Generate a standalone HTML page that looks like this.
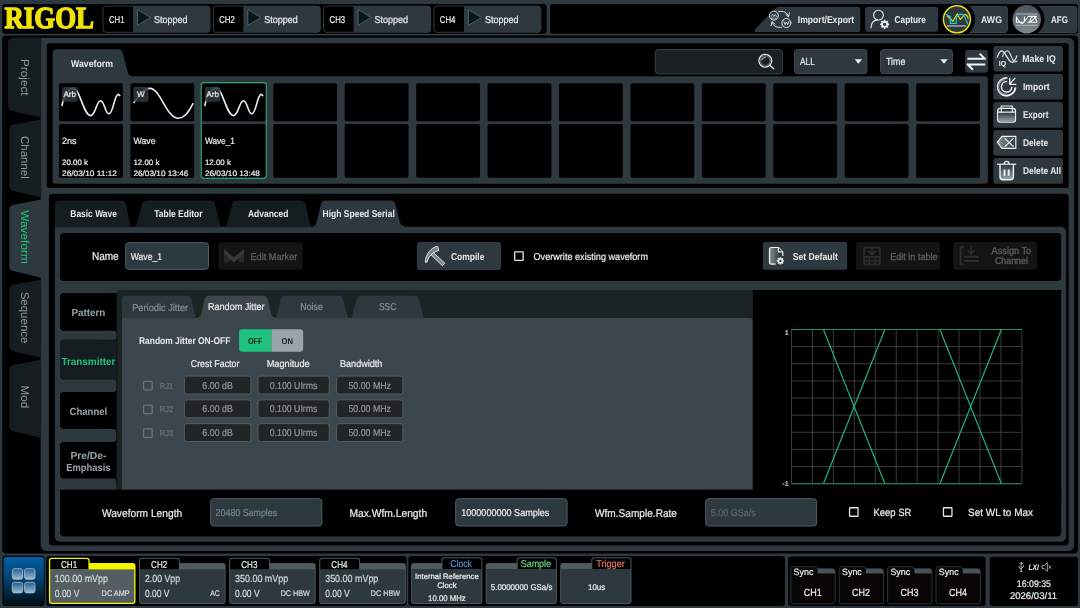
<!DOCTYPE html>
<html lang="en"><head><meta charset="utf-8"><title>RIGOL AWG - Waveform</title>
<style>
html,body{margin:0;padding:0;background:#2d383f;overflow:hidden}
body{width:1080px;height:608px}
svg{display:block;will-change:transform;font-family:"Liberation Sans",sans-serif;text-rendering:geometricPrecision}
text{white-space:pre}
</style></head><body>
<svg width="1080" height="608" viewBox="0 0 1080 608">
<defs>
<linearGradient id="gAfg" x1="0" y1="0" x2="0" y2="1"><stop offset="0" stop-color="#4a545a"/><stop offset="1" stop-color="#808b90"/></linearGradient>
<linearGradient id="gHome" x1="0" y1="0" x2="0" y2="1"><stop offset="0" stop-color="#045fa3"/><stop offset="0.45" stop-color="#04416e"/><stop offset="1" stop-color="#010d16"/></linearGradient>
<linearGradient id="gSq" x1="0" y1="0" x2="0" y2="1"><stop offset="0" stop-color="#1f5f91"/><stop offset="1" stop-color="#a3bbcd"/></linearGradient>
<linearGradient id="gIcon" x1="0" y1="0" x2="0" y2="1"><stop offset="0" stop-color="#2d383f"/><stop offset="1" stop-color="#9aa3a8"/></linearGradient>
</defs>
<rect x="0.00" y="0.00" width="1080.00" height="608.00" fill="#2d383f" />
<rect x="2.20" y="4.10" width="544.50" height="29.70" fill="#000" rx="3" />
<rect x="550.00" y="4.10" width="528.00" height="29.70" fill="#000" rx="3" />
<text x="4.40" y="28.40" font-size="30.6" fill="#f0e406" font-weight="bold" textLength="89.60" lengthAdjust="spacingAndGlyphs" font-family="&quot;Liberation Serif&quot;,serif" stroke="#f0e406" stroke-width="1.3" stroke-linejoin="miter">RIGOL</text>
<rect x="103.00" y="6.10" width="107.00" height="26.20" fill="#2d383f" rx="3" />
<path d="M133.0,5.6 H106.0 a3,3 0 0 0 -3,3 V29.8 a3,3 0 0 0 3,3 H133.0 Z" fill="#000" />
<rect x="103.00" y="6.10" width="107.00" height="26.20" fill="none" rx="3" stroke="#2d383f" stroke-width="1" />
<text x="116.70" y="22.50" font-size="9.95" fill="#e9ebec" text-anchor="middle" textLength="15.60" lengthAdjust="spacingAndGlyphs" stroke="#e9ebec" stroke-width="0.22" >CH1</text>
<path d="M137.5,9.6 L150.7,17.5 L137.5,25.4 Z" fill="#07181c" stroke="#55646c" stroke-width="0.9" stroke-linejoin="round"/>
<text x="154.00" y="22.50" font-size="9.95" fill="#e9ebec" textLength="33.50" lengthAdjust="spacingAndGlyphs" stroke="#e9ebec" stroke-width="0.22" >Stopped</text>
<rect x="213.30" y="6.10" width="107.00" height="26.20" fill="#2d383f" rx="3" />
<path d="M243.3,5.6 H216.3 a3,3 0 0 0 -3,3 V29.8 a3,3 0 0 0 3,3 H243.3 Z" fill="#000" />
<rect x="213.30" y="6.10" width="107.00" height="26.20" fill="none" rx="3" stroke="#2d383f" stroke-width="1" />
<text x="227.00" y="22.50" font-size="9.95" fill="#e9ebec" text-anchor="middle" textLength="15.60" lengthAdjust="spacingAndGlyphs" stroke="#e9ebec" stroke-width="0.22" >CH2</text>
<path d="M247.8,9.6 L261.0,17.5 L247.8,25.4 Z" fill="#07181c" stroke="#55646c" stroke-width="0.9" stroke-linejoin="round"/>
<text x="264.30" y="22.50" font-size="9.95" fill="#e9ebec" textLength="33.50" lengthAdjust="spacingAndGlyphs" stroke="#e9ebec" stroke-width="0.22" >Stopped</text>
<rect x="323.60" y="6.10" width="107.00" height="26.20" fill="#2d383f" rx="3" />
<path d="M353.6,5.6 H326.6 a3,3 0 0 0 -3,3 V29.8 a3,3 0 0 0 3,3 H353.6 Z" fill="#000" />
<rect x="323.60" y="6.10" width="107.00" height="26.20" fill="none" rx="3" stroke="#2d383f" stroke-width="1" />
<text x="337.30" y="22.50" font-size="9.95" fill="#e9ebec" text-anchor="middle" textLength="15.60" lengthAdjust="spacingAndGlyphs" stroke="#e9ebec" stroke-width="0.22" >CH3</text>
<path d="M358.1,9.6 L371.3,17.5 L358.1,25.4 Z" fill="#07181c" stroke="#55646c" stroke-width="0.9" stroke-linejoin="round"/>
<text x="374.60" y="22.50" font-size="9.95" fill="#e9ebec" textLength="33.50" lengthAdjust="spacingAndGlyphs" stroke="#e9ebec" stroke-width="0.22" >Stopped</text>
<rect x="433.90" y="6.10" width="107.00" height="26.20" fill="#2d383f" rx="3" />
<path d="M463.9,5.6 H436.9 a3,3 0 0 0 -3,3 V29.8 a3,3 0 0 0 3,3 H463.9 Z" fill="#000" />
<rect x="433.90" y="6.10" width="107.00" height="26.20" fill="none" rx="3" stroke="#2d383f" stroke-width="1" />
<text x="447.60" y="22.50" font-size="9.95" fill="#e9ebec" text-anchor="middle" textLength="15.60" lengthAdjust="spacingAndGlyphs" stroke="#e9ebec" stroke-width="0.22" >CH4</text>
<path d="M468.4,9.6 L481.59999999999997,17.5 L468.4,25.4 Z" fill="#07181c" stroke="#55646c" stroke-width="0.9" stroke-linejoin="round"/>
<text x="484.90" y="22.50" font-size="9.95" fill="#e9ebec" textLength="33.50" lengthAdjust="spacingAndGlyphs" stroke="#e9ebec" stroke-width="0.22" >Stopped</text>
<path d="M778.5,6.7 H857.8 a2.5,2.5 0 0 1 2.5,2.5 V29.4 a2.5,2.5 0 0 1 -2.5,2.5 H756 a1.6,1.6 0 0 1 -1.1,-2.7 L776.6,7.4 Z" fill="#2d383f" />
<text x="797.80" y="22.70" font-size="9.95" fill="#e9ebec" font-weight="bold" textLength="56.30" lengthAdjust="spacingAndGlyphs" >Import/Export</text>
<g fill="none" stroke="#e6e9ea" stroke-width="0.95" stroke-linecap="round" stroke-linejoin="round"><circle cx="773.9" cy="15.6" r="4.5"/><circle cx="786.4" cy="23" r="4.5"/><path d="M778.6,11.6 C783.6,10.4 787.8,12.6 788.4,16.6 M785.8,14.4 L788.4,16.9 L789.4,12.9"/><path d="M781.8,27.2 C777,28.2 772.8,26 772.2,22 M771,25.6 L772.1,21.8 L775,24.2"/><path d="M771.2,16.6 L772.5,14.2 L773.9,16.6 L775.3,14.2 L776.6,16.6 M771.6,18.2 H776.2" stroke-width="0.7"/><path d="M783.8,21.2 L785.1,24.8 L786.4,22 L787.7,24.8 L789,21.2" stroke-width="0.9"/></g>
<rect x="865.10" y="6.70" width="73.00" height="25.00" fill="#2d383f" rx="2.5" />
<text x="894.60" y="22.70" font-size="9.95" fill="#e9ebec" font-weight="bold" textLength="31.20" lengthAdjust="spacingAndGlyphs" >Capture</text>
<g fill="none" stroke="#e8eaeb" stroke-width="1.15" stroke-linecap="round"><circle cx="878.5" cy="15.1" r="4.9"/><path d="M871,27.8 C871.2,23 873.8,20.2 877.2,19.9"/></g>
<g transform="translate(884.6,24.3)"><circle r="2.5" fill="none" stroke="#eef0f1" stroke-width="1.7"/><rect x="-0.9" y="-4.5" width="1.8" height="2" fill="#eef0f1" transform="rotate(0)"/><rect x="-0.9" y="-4.5" width="1.8" height="2" fill="#eef0f1" transform="rotate(45)"/><rect x="-0.9" y="-4.5" width="1.8" height="2" fill="#eef0f1" transform="rotate(90)"/><rect x="-0.9" y="-4.5" width="1.8" height="2" fill="#eef0f1" transform="rotate(135)"/><rect x="-0.9" y="-4.5" width="1.8" height="2" fill="#eef0f1" transform="rotate(180)"/><rect x="-0.9" y="-4.5" width="1.8" height="2" fill="#eef0f1" transform="rotate(225)"/><rect x="-0.9" y="-4.5" width="1.8" height="2" fill="#eef0f1" transform="rotate(270)"/><rect x="-0.9" y="-4.5" width="1.8" height="2" fill="#eef0f1" transform="rotate(315)"/></g>
<clipPath id="cpTop"><rect x="550" y="4.1" width="528" height="29.7" rx="3"/></clipPath>
<g clip-path="url(#cpTop)">
<rect x="957.50" y="6.40" width="49.90" height="26.10" fill="#2d383f" rx="2.5" stroke="#36424a" stroke-width="1" />
<circle cx="956.9" cy="19.3" r="18.2" fill="#000"/>
<rect x="938.40" y="4.10" width="18.60" height="29.70" fill="#000" />
<rect x="1027.00" y="6.40" width="49.90" height="26.10" fill="#2d383f" rx="2.5" stroke="#36424a" stroke-width="1" />
<circle cx="1026.7" cy="19.3" r="17.8" fill="#000"/>
<rect x="1008.20" y="4.10" width="18.30" height="29.70" fill="#000" />
</g>
<circle cx="956.9" cy="19.3" r="13.5" fill="#2d383f" stroke="#e6df10" stroke-width="1.5"/>
<path d="M947,15.7 L953,21.3 L957.3,13.7 L960.3,19.7 L964,15 C966,14 967.6,15.6 968.3,18.7" fill="none" stroke="#e6df10" stroke-width="1.2" stroke-linejoin="round"/>
<path d="M945.7,14.3 L950.3,16.6 V23.3 H956.3 V17 L959.6,14.4 H962.6 C964.6,15.4 966,20.6 967.8,24" fill="none" stroke="#19cfe0" stroke-width="1.2" stroke-linejoin="round"/>
<rect x="947.00" y="25.00" width="19.30" height="1.80" fill="#8e9599" />
<text x="991.50" y="23.00" font-size="9.74" fill="#e9ebec" font-weight="bold" text-anchor="middle" textLength="21.00" lengthAdjust="spacingAndGlyphs" >AWG</text>
<circle cx="1026.7" cy="19.3" r="14.2" fill="url(#gAfg)"/>
<path d="M1016,14 H1037.3 M1016,25.3 H1037.3" stroke="#b4babd" stroke-width="1" fill="none"/>
<g fill="none" stroke="#f4f5f6" stroke-width="1.1" stroke-linejoin="round"><path d="M1016.4,16.6 V22.2 H1022.4 M1016.2,16.4 C1018,20.6 1020,23.6 1022.6,23.4 L1028.4,16.4 H1031.4 M1024.4,22.2 V16.6 M1027.4,22.2 H1037 M1029.6,22.2 C1030.6,18.6 1032.2,16.4 1033.4,16.4 C1034.8,16.4 1036,19 1037,22.4 M1030.4,22.2 L1036.6,16.4 M1031.4,16.4 H1037"/></g>
<text x="1059.50" y="23.00" font-size="9.74" fill="#e9ebec" font-weight="bold" text-anchor="middle" textLength="17.00" lengthAdjust="spacingAndGlyphs" >AFG</text>
<rect x="2.20" y="35.50" width="1075.80" height="518.00" fill="#000" rx="4" />
<path d="M40.7,37.8 H1068.2 a6,6 0 0 1 6,6 V545 a6,6 0 0 1 -6,6 H46.7 a6,6 0 0 1 -6,-6 Z" fill="#2d383f" />
<path d="M41.2,37.8 H12.9 a5,5 0 0 0 -5,5 V106.0 Q7.9,110.0 11.9,110.9 L41.2,117.5 Z" fill="#161d20" />
<text transform="translate(21.2,59.1) rotate(90)" font-size="11.5" fill="#8e979b" textLength="36.4" lengthAdjust="spacingAndGlyphs">Project</text>
<path d="M41.2,119.5 L13.3,124.6 Q9.3,125.5 9.3,129.5 V186.1 Q9.3,190.1 13.3,191.0 L41.2,197.6 Z" fill="#161d20" />
<text transform="translate(21.2,136.1) rotate(90)" font-size="11.5" fill="#8e979b" textLength="42.6" lengthAdjust="spacingAndGlyphs">Channel</text>
<path d="M41.2,199.6 L13.3,204.7 Q9.3,205.6 9.3,209.6 V266.2 Q9.3,270.2 13.3,271.09999999999997 L41.2,277.7 Z" fill="#2d383f" />
<text transform="translate(21.2,210.3) rotate(90)" font-size="11.5" fill="#1fc27c" textLength="53.5" lengthAdjust="spacingAndGlyphs">Waveform</text>
<path d="M41.2,279.7 L13.3,284.8 Q9.3,285.7 9.3,289.7 V346.29999999999995 Q9.3,350.29999999999995 13.3,351.19999999999993 L41.2,357.79999999999995 Z" fill="#161d20" />
<text transform="translate(21.2,291.7) rotate(90)" font-size="11.5" fill="#8e979b" textLength="51.7" lengthAdjust="spacingAndGlyphs">Sequence</text>
<path d="M41.2,359.79999999999995 L13.3,364.9 Q9.3,365.79999999999995 9.3,369.79999999999995 V426.4 Q9.3,430.4 13.3,431.29999999999995 L41.2,437.9 Z" fill="#161d20" />
<text transform="translate(21.2,385.4) rotate(90)" font-size="11.5" fill="#8e979b" textLength="22.8" lengthAdjust="spacingAndGlyphs">Mod</text>
<rect x="46.80" y="43.30" width="1021.90" height="144.70" fill="#000" rx="2.5" />
<rect x="48.90" y="193.80" width="1019.80" height="351.60" fill="#000" rx="4" />
<path d="M52.6,80 V53.3 a4,4 0 0 1 4,-4 H118.6 a4,4 0 0 1 3.8,2.8 L128.2,73.6 a4,4 0 0 0 3.6,2.7 H984.9 a3,3 0 0 1 3,3 V180.7 a3,3 0 0 1 -3,3 H55.6 a3,3 0 0 1 -3,-3 Z" fill="#2d383f" />
<text x="92.00" y="66.60" font-size="9.95" fill="#e9ebec" font-weight="bold" text-anchor="middle" textLength="42.00" lengthAdjust="spacingAndGlyphs" >Waveform</text>
<rect x="59.00" y="83.30" width="63.80" height="37.90" fill="#000" rx="2" />
<rect x="59.00" y="124.00" width="63.80" height="53.70" fill="#000" rx="2" />
<rect x="130.43" y="83.30" width="63.80" height="37.90" fill="#000" rx="2" />
<rect x="130.43" y="124.00" width="63.80" height="53.70" fill="#000" rx="2" />
<rect x="201.86" y="83.30" width="63.80" height="37.90" fill="#000" rx="2" />
<rect x="201.86" y="124.00" width="63.80" height="53.70" fill="#000" rx="2" />
<rect x="273.29" y="83.30" width="63.80" height="37.90" fill="#000" rx="2" />
<rect x="273.29" y="124.00" width="63.80" height="53.70" fill="#000" rx="2" />
<rect x="344.72" y="83.30" width="63.80" height="37.90" fill="#000" rx="2" />
<rect x="344.72" y="124.00" width="63.80" height="53.70" fill="#000" rx="2" />
<rect x="416.15" y="83.30" width="63.80" height="37.90" fill="#000" rx="2" />
<rect x="416.15" y="124.00" width="63.80" height="53.70" fill="#000" rx="2" />
<rect x="487.58" y="83.30" width="63.80" height="37.90" fill="#000" rx="2" />
<rect x="487.58" y="124.00" width="63.80" height="53.70" fill="#000" rx="2" />
<rect x="559.01" y="83.30" width="63.80" height="37.90" fill="#000" rx="2" />
<rect x="559.01" y="124.00" width="63.80" height="53.70" fill="#000" rx="2" />
<rect x="630.44" y="83.30" width="63.80" height="37.90" fill="#000" rx="2" />
<rect x="630.44" y="124.00" width="63.80" height="53.70" fill="#000" rx="2" />
<rect x="701.87" y="83.30" width="63.80" height="37.90" fill="#000" rx="2" />
<rect x="701.87" y="124.00" width="63.80" height="53.70" fill="#000" rx="2" />
<rect x="773.30" y="83.30" width="63.80" height="37.90" fill="#000" rx="2" />
<rect x="773.30" y="124.00" width="63.80" height="53.70" fill="#000" rx="2" />
<rect x="844.73" y="83.30" width="63.80" height="37.90" fill="#000" rx="2" />
<rect x="844.73" y="124.00" width="63.80" height="53.70" fill="#000" rx="2" />
<rect x="916.16" y="83.30" width="63.80" height="37.90" fill="#000" rx="2" />
<rect x="916.16" y="124.00" width="63.80" height="53.70" fill="#000" rx="2" />
<rect x="201.20" y="82.60" width="65.20" height="95.80" fill="none" rx="2.6" stroke="#2a9f70" stroke-width="1.1" />
<path d="M62,105.5 C64,96 68,88.4 73.5,88.4 C80,88.4 83.5,115.6 90.5,115.6 C95.5,115.6 96.5,100.8 100.6,100.8 C104.5,100.8 105,113.8 108.8,113.8 C113.5,113.8 114,94.4 118.4,94.4 L119.8,95.6" fill="none" stroke="#eceeee" stroke-width="1.6" stroke-linecap="round"/>
<rect x="62.00" y="86.70" width="15.50" height="15.10" fill="#2d383f" rx="2" fill-opacity="0.85"/>
<text x="69.75" y="97.20" font-size="8.13" fill="#e9ebec" text-anchor="middle" stroke="#e9ebec" stroke-width="0.22" >Arb</text>
<path d="M134.0,102.6 C138.4,96 143.4,88.4 150.0,88.4 C160.4,88.4 166.4,118.3 178.4,118.3 C184.4,118.3 189.4,111 193.0,103.6" fill="none" stroke="#eceeee" stroke-width="1.6" stroke-linecap="round"/>
<rect x="133.40" y="86.70" width="15.00" height="15.10" fill="#2d383f" rx="2" fill-opacity="0.85"/>
<text x="140.90" y="97.20" font-size="8.13" fill="#e9ebec" text-anchor="middle" stroke="#e9ebec" stroke-width="0.22" >W</text>
<path d="M204.9,105.5 C206.9,96 210.9,88.4 216.4,88.4 C222.9,88.4 226.4,115.6 233.4,115.6 C238.4,115.6 239.4,100.8 243.5,100.8 C247.4,100.8 247.9,113.8 251.7,113.8 C256.4,113.8 256.9,94.4 261.3,94.4 L262.7,95.6" fill="none" stroke="#eceeee" stroke-width="1.6" stroke-linecap="round"/>
<rect x="204.90" y="86.70" width="15.50" height="15.10" fill="#2d383f" rx="2" fill-opacity="0.85"/>
<text x="212.65" y="97.20" font-size="8.13" fill="#e9ebec" text-anchor="middle" stroke="#e9ebec" stroke-width="0.22" >Arb</text>
<text x="62.00" y="143.60" font-size="9.2" fill="#e9ebec" textLength="14.60" lengthAdjust="spacingAndGlyphs" stroke="#e9ebec" stroke-width="0.22" >2ns</text>
<text x="62.00" y="165.20" font-size="7.81" fill="#e9ebec" textLength="26.00" lengthAdjust="spacingAndGlyphs" stroke="#e9ebec" stroke-width="0.22" >20.00 k</text>
<text x="62.00" y="176.10" font-size="7.81" fill="#e9ebec" textLength="55.00" lengthAdjust="spacingAndGlyphs" stroke="#e9ebec" stroke-width="0.22" >26/03/10 11:12</text>
<text x="133.40" y="143.60" font-size="9.2" fill="#e9ebec" textLength="22.20" lengthAdjust="spacingAndGlyphs" stroke="#e9ebec" stroke-width="0.22" >Wave</text>
<text x="133.40" y="165.20" font-size="7.81" fill="#e9ebec" textLength="26.00" lengthAdjust="spacingAndGlyphs" stroke="#e9ebec" stroke-width="0.22" >12.00 k</text>
<text x="133.40" y="176.10" font-size="7.81" fill="#e9ebec" textLength="55.00" lengthAdjust="spacingAndGlyphs" stroke="#e9ebec" stroke-width="0.22" >26/03/10 13:46</text>
<text x="204.90" y="143.60" font-size="9.2" fill="#e9ebec" textLength="30.00" lengthAdjust="spacingAndGlyphs" stroke="#e9ebec" stroke-width="0.22" >Wave_1</text>
<text x="204.90" y="165.20" font-size="7.81" fill="#e9ebec" textLength="26.00" lengthAdjust="spacingAndGlyphs" stroke="#e9ebec" stroke-width="0.22" >12.00 k</text>
<text x="204.90" y="176.10" font-size="7.81" fill="#e9ebec" textLength="55.00" lengthAdjust="spacingAndGlyphs" stroke="#e9ebec" stroke-width="0.22" >26/03/10 13:48</text>
<rect x="655.30" y="49.60" width="127.10" height="24.30" fill="#1b2024" rx="3" stroke="#364249" stroke-width="1" />
<g fill="none" stroke-linecap="round"><circle cx="765.3" cy="60.7" r="6.4" stroke="#eceeef" stroke-width="1.3"/><circle cx="765.3" cy="60.7" r="5" stroke="#586166" stroke-width="1.5"/><path d="M761.8,60 A3.8,3.8 0 0 1 765.2,57.2" stroke="#d4d8da" stroke-width="0.9"/><path d="M769.9,65.3 L773.7,68.7" stroke="#eceeef" stroke-width="1.5"/></g>
<rect x="794.50" y="49.50" width="72.40" height="24.20" fill="#2d383f" rx="3" stroke="#3d4950" stroke-width="1" />
<text x="800.00" y="65.20" font-size="10.27" fill="#e9ebec" textLength="14.80" lengthAdjust="spacingAndGlyphs" stroke="#e9ebec" stroke-width="0.22" >ALL</text>
<path d="M854.6,59.2 h7.6 l-3.8,4.6 Z" fill="#e9ebec" />
<rect x="880.50" y="49.50" width="72.00" height="24.20" fill="#2d383f" rx="3" stroke="#3d4950" stroke-width="1" />
<text x="886.00" y="65.20" font-size="10.27" fill="#e9ebec" textLength="19.30" lengthAdjust="spacingAndGlyphs" stroke="#e9ebec" stroke-width="0.22" >Time</text>
<path d="M940.2,59.2 h7.6 l-3.8,4.6 Z" fill="#e9ebec" />
<rect x="965.20" y="50.00" width="22.70" height="22.70" fill="#2d383f" rx="2.5" />
<g fill="none" stroke="#f4f5f6" stroke-width="2" stroke-linecap="butt" stroke-linejoin="miter"><path d="M967.4,58.8 H985.2 M985.6,59.4 L979.6,53.6"/><path d="M985.2,64.4 H967.4 M967,63.8 L973,69.8"/></g>
<rect x="993.30" y="46.00" width="69.70" height="25.60" fill="#2d383f" rx="2.5" />
<text x="1022.30" y="61.70" font-size="9.84" fill="#e9ebec" font-weight="bold" textLength="33.50" lengthAdjust="spacingAndGlyphs" >Make IQ</text>
<rect x="993.30" y="74.02" width="69.70" height="25.60" fill="#2d383f" rx="2.5" />
<text x="1022.90" y="89.72" font-size="9.84" fill="#e9ebec" font-weight="bold" textLength="26.70" lengthAdjust="spacingAndGlyphs" >Import</text>
<rect x="993.30" y="102.04" width="69.70" height="25.60" fill="#2d383f" rx="2.5" />
<text x="1022.90" y="117.74" font-size="9.84" fill="#e9ebec" font-weight="bold" textLength="25.50" lengthAdjust="spacingAndGlyphs" >Export</text>
<rect x="993.30" y="130.06" width="69.70" height="25.60" fill="#2d383f" rx="2.5" />
<text x="1022.90" y="145.76" font-size="9.84" fill="#e9ebec" font-weight="bold" textLength="25.20" lengthAdjust="spacingAndGlyphs" >Delete</text>
<rect x="993.30" y="158.08" width="69.70" height="25.60" fill="#2d383f" rx="2.5" />
<text x="1022.90" y="173.78" font-size="9.84" fill="#e9ebec" font-weight="bold" textLength="38.10" lengthAdjust="spacingAndGlyphs" >Delete All</text>
<g stroke="#eef0f1" fill="none" stroke-linecap="round" stroke-linejoin="round" stroke-width="1.2"><path d="M997.2,57.4 C998.6,53.4 1000,50.9 1001.6,50.9 C1005.4,50.9 1008,62.3 1012.2,62.3 C1014,62.3 1015.6,59.4 1016.9,55.8"/><path d="M1002.4,56.8 C1003.8,53.2 1005.6,50.9 1007.4,50.9 C1010.6,50.9 1012,61.9 1015.2,61.9 C1015.9,61.9 1016.5,61.6 1017,61.1" stroke="#c9cdd0"/></g>
<text x="998.70" y="65.60" font-size="7.28" fill="#e9ebec" font-weight="bold" textLength="7.40" lengthAdjust="spacingAndGlyphs" >IQ</text>
<g stroke="#eef0f1" fill="none" stroke-linecap="round" stroke-linejoin="round"><path d="M1006.6,77.9 A8.9,8.9 0 1 0 1015.4,88.2" stroke-width="1.9"/><path d="M1004.6,79.6 A7.2,7.2 0 0 0 1006.6,94" stroke="#8d969b" stroke-width="1.6" stroke-opacity="0.75"/><path d="M1006.6,81.6 A5.2,5.2 0 1 0 1011.8,87.4" stroke-width="1.5"/><path d="M1015.2,77.9 L1009.9,83.9 M1009.7,77.8 V84.3 H1016.3" stroke-width="1.3" stroke-linecap="butt"/></g>
<g stroke="#eef0f1" fill="none" stroke-linecap="round" stroke-linejoin="round" stroke-width="1.3"><rect x="997.7" y="108.3" width="17.8" height="13.9" rx="2.6"/><rect x="998.4" y="112.6" width="16.4" height="9" rx="1.8" fill="url(#gIcon)" stroke="none"/><path d="M997.7,112.1 H1015.5"/><path d="M1001.3,112 V106 H1012.3 V112" stroke-width="1.2"/></g>
<linearGradient id="gDel" x1="0" y1="0" x2="1" y2="0"><stop offset="0" stop-color="#8a9398"/><stop offset="1" stop-color="#2d383f"/></linearGradient>
<g stroke="#eef0f1" fill="none" stroke-linecap="round" stroke-linejoin="round" stroke-width="1.2"><path d="M1002,136.3 H1015.8 V148.3 H1002 L997.3,142.3 Z" fill="url(#gDel)" stroke-linejoin="miter"/><path d="M1005,138.6 L1013.2,146.4 M1013.2,138.6 L1005,146.4"/></g>
<g stroke="#eef0f1" fill="none" stroke-linecap="round" stroke-linejoin="round" stroke-width="1.2"><path d="M997,164.2 H1016.2" stroke-linecap="butt"/><path d="M1004.2,163.8 a2.4,2.4 0 0 1 4.8,0" /><path d="M1000,165 V176.8 a3,3 0 0 0 3,3 H1010.4 a3,3 0 0 0 3,-3 V165" fill="url(#gIcon)" stroke-width="1.4"/><path d="M1004.5,169.4 V175.8 M1008.7,169.4 V175.8" stroke-width="1.9" stroke-linecap="butt"/></g>
<rect x="54.80" y="226.70" width="1011.20" height="315.00" fill="#2d383f" rx="5" />
<rect x="54.80" y="226.70" width="5.20" height="5.30" fill="#2d383f" />
<path d="M54.80,227.2 L54.80,204.40 Q54.80,200.4 58.80,200.4 H121.20 Q125.20,200.4 125.99,204.32 L130.60,227.2 Z" fill="#161d20" />
<path d="M135.40,227.2 L141.91,204.25 Q143.00,200.4 147.00,200.4 H210.00 Q214.00,200.4 214.98,204.28 L220.80,227.2 Z" fill="#161d20" />
<path d="M225.80,227.2 L232.22,204.25 Q233.30,200.4 237.30,200.4 H300.80 Q304.80,200.4 305.65,204.31 L310.60,227.2 Z" fill="#161d20" />
<path d="M315.40,227.2 L320.96,204.29 Q321.90,200.4 325.90,200.4 H390.40 Q394.40,200.4 395.38,204.28 L401.20,227.2 Z" fill="#2d383f" />
<path d="M401.2,227.2 L399.4,221.2 Q401.4,226.6 406.6,226.8 Z" fill="#2d383f" />
<path d="M315.4,227.2 L317,221.2 Q315.6,226.6 311.4,226.8 Z" fill="#2d383f" />
<text x="93.60" y="217.10" font-size="9.95" fill="#e9ebec" font-weight="bold" text-anchor="middle" textLength="46.60" lengthAdjust="spacingAndGlyphs" >Basic Wave</text>
<text x="178.40" y="217.10" font-size="9.95" fill="#e9ebec" font-weight="bold" text-anchor="middle" textLength="48.40" lengthAdjust="spacingAndGlyphs" >Table Editor</text>
<text x="268.20" y="217.10" font-size="9.95" fill="#e9ebec" font-weight="bold" text-anchor="middle" textLength="40.60" lengthAdjust="spacingAndGlyphs" >Advanced</text>
<text x="358.70" y="217.10" font-size="9.95" fill="#e9ebec" font-weight="bold" text-anchor="middle" textLength="72.20" lengthAdjust="spacingAndGlyphs" >High Speed Serial</text>
<rect x="60.00" y="233.00" width="1001.20" height="48.00" fill="#000" rx="4" />
<text x="91.90" y="260.20" font-size="11.34" fill="#e9ebec" textLength="26.80" lengthAdjust="spacingAndGlyphs" stroke="#e9ebec" stroke-width="0.22" >Name</text>
<rect x="125.70" y="242.70" width="82.80" height="26.60" fill="#2d383f" rx="3" stroke="#50606a" stroke-width="1" />
<text x="130.80" y="259.60" font-size="9.95" fill="#e9ebec" textLength="31.20" lengthAdjust="spacingAndGlyphs" stroke="#e9ebec" stroke-width="0.22" >Wave_1</text>
<rect x="218.50" y="242.20" width="84.10" height="27.60" fill="#131414" rx="3" />
<path d="M224,249 L234,258 L244,249 V262.6 H240.6 L234,257 L227.4,262.6 H224 Z" fill="#26292b" />
<path d="M224,249 L234,257.6 L244,249 V253.6 L234,262.4 L224,253.6 Z" fill="#34393c" />
<text x="250.40" y="259.50" font-size="9.95" fill="#596064" textLength="47.00" lengthAdjust="spacingAndGlyphs" stroke="#596064" stroke-width="0.3">Edit Marker</text>
<rect x="416.90" y="242.00" width="84.20" height="28.00" fill="#2d383f" rx="2.5" />
<text x="451.00" y="259.60" font-size="9.95" fill="#e9ebec" font-weight="bold" textLength="33.40" lengthAdjust="spacingAndGlyphs" >Compile</text>
<g fill="#7b858a" stroke="#f2f3f4" stroke-width="0.9" stroke-linejoin="round"><path d="M425.3,262.2 C425.6,254.6 430.2,248 437.5,246.2 L438.8,250.5 C432.6,252.4 428.2,256.4 427,262.2 Z"/><path d="M431,254.8 L433.3,252.6 L444.9,263.3 L442.5,265.7 Z"/></g>
<rect x="514.65" y="251.95" width="8.50" height="8.50" fill="#000" rx="0.4" stroke="#dfe2e3" stroke-width="1.3" />
<text x="533.50" y="259.60" font-size="9.95" fill="#e9ebec" textLength="114.50" lengthAdjust="spacingAndGlyphs" stroke="#e9ebec" stroke-width="0.22" >Overwrite existing waveform</text>
<rect x="762.80" y="241.90" width="84.40" height="27.90" fill="#2d383f" rx="2.5" />
<text x="792.80" y="259.60" font-size="9.95" fill="#e9ebec" font-weight="bold" textLength="45.00" lengthAdjust="spacingAndGlyphs" >Set Default</text>
<linearGradient id="gDoc" x1="0" y1="0" x2="1" y2="0"><stop offset="0" stop-color="#868f94"/><stop offset="0.8" stop-color="#2d383f"/></linearGradient>
<g fill="none" stroke="#f0f2f3" stroke-width="1.2" stroke-linejoin="round"><path d="M775.6,264.1 H771 a1.5,1.5 0 0 1 -1.5,-1.5 V249 a1.5,1.5 0 0 1 1.5,-1.5 H778.4 L782.8,251.9 V256" fill="url(#gDoc)"/><path d="M778.4,247.5 V251.9 H782.8" fill="#2d383f"/></g>
<g transform="translate(780.4,260.9)"><circle r="1.9" fill="#2d383f" stroke="#f0f2f3" stroke-width="1.3"/><rect x="-0.75" y="-3.6" width="1.5" height="1.6" fill="#f0f2f3" transform="rotate(0)"/><rect x="-0.75" y="-3.6" width="1.5" height="1.6" fill="#f0f2f3" transform="rotate(45)"/><rect x="-0.75" y="-3.6" width="1.5" height="1.6" fill="#f0f2f3" transform="rotate(90)"/><rect x="-0.75" y="-3.6" width="1.5" height="1.6" fill="#f0f2f3" transform="rotate(135)"/><rect x="-0.75" y="-3.6" width="1.5" height="1.6" fill="#f0f2f3" transform="rotate(180)"/><rect x="-0.75" y="-3.6" width="1.5" height="1.6" fill="#f0f2f3" transform="rotate(225)"/><rect x="-0.75" y="-3.6" width="1.5" height="1.6" fill="#f0f2f3" transform="rotate(270)"/><rect x="-0.75" y="-3.6" width="1.5" height="1.6" fill="#f0f2f3" transform="rotate(315)"/></g>
<rect x="856.00" y="241.90" width="84.00" height="27.90" fill="#131414" rx="2.5" />
<text x="890.20" y="259.50" font-size="9.95" fill="#596064" textLength="47.40" lengthAdjust="spacingAndGlyphs" stroke="#596064" stroke-width="0.3">Edit in table</text>
<g fill="none" stroke="#2b2f31" stroke-width="1.5" stroke-linejoin="round"><rect x="864" y="247.8" width="16" height="16.8" rx="2"/><path d="M864,256.7 H880 M864,261 H880 M869.2,256.7 V264.6 M874.9,256.7 V264.6 M872,247.4 V254.4 M868.4,251 L872,254.6 L875.6,251"/></g>
<rect x="953.20" y="241.90" width="84.00" height="27.90" fill="#131414" rx="2.5" />
<text x="1011.40" y="254.00" font-size="9.95" fill="#596064" text-anchor="middle" textLength="39.60" lengthAdjust="spacingAndGlyphs" stroke="#596064" stroke-width="0.3">Assign To</text>
<text x="1011.40" y="264.30" font-size="9.95" fill="#596064" text-anchor="middle" textLength="33.00" lengthAdjust="spacingAndGlyphs" stroke="#596064" stroke-width="0.3">Channel</text>
<g fill="none" stroke="#2b2f31" stroke-width="1.9" stroke-linejoin="miter"><path d="M964,247.2 H960.6 V264.4 H964"/><path d="M964,256.7 H978.7 M964,261 H978.7"/><path d="M971.3,246.4 V253.6 M967.6,250.2 L971.3,253.9 L975,250.2" stroke-width="1.5"/></g>
<rect x="60.00" y="293.00" width="56.80" height="37.70" fill="#000" rx="4" />
<rect x="108.00" y="293.00" width="8.60" height="37.70" fill="#000" />
<rect x="60.00" y="339.40" width="56.80" height="40.40" fill="#161d20" rx="4" />
<rect x="108.00" y="339.40" width="8.60" height="40.40" fill="#161d20" />
<rect x="60.00" y="392.00" width="56.80" height="37.00" fill="#000" rx="4" />
<rect x="108.00" y="392.00" width="8.60" height="37.00" fill="#000" />
<rect x="60.00" y="442.00" width="56.80" height="36.50" fill="#000" rx="4" />
<rect x="108.00" y="442.00" width="8.60" height="36.50" fill="#000" />
<text x="88.40" y="316.20" font-size="10.27" fill="#9aa4a9" font-weight="bold" text-anchor="middle" textLength="34.00" lengthAdjust="spacingAndGlyphs" >Pattern</text>
<text x="88.40" y="364.80" font-size="10.27" fill="#1fc27c" font-weight="bold" text-anchor="middle" textLength="54.00" lengthAdjust="spacingAndGlyphs" >Transmitter</text>
<text x="88.40" y="414.80" font-size="10.27" fill="#9aa4a9" font-weight="bold" text-anchor="middle" textLength="37.60" lengthAdjust="spacingAndGlyphs" >Channel</text>
<text x="88.40" y="459.40" font-size="10.27" fill="#9aa4a9" font-weight="bold" text-anchor="middle" textLength="36.00" lengthAdjust="spacingAndGlyphs" >Pre/De-</text>
<text x="88.40" y="470.80" font-size="10.27" fill="#9aa4a9" font-weight="bold" text-anchor="middle" textLength="44.40" lengthAdjust="spacingAndGlyphs" >Emphasis</text>
<path d="M119.4,290 H752.8 V489.9 H116.4 V293 a3,3 0 0 1 3,-3 Z" fill="#1b2423" />
<path d="M116.4,290 h-6 q6,0 6,6 Z" fill="#2d383f" />
<path d="M122,318.1 H749.8 a3,3 0 0 1 3,3 V489.9 H122 Z" fill="#3c474d" />
<rect x="116.20" y="293.50" width="1.20" height="196.40" fill="#0e1414" />
<rect x="110.00" y="330.50" width="6.40" height="4.55" fill="#000" />
<rect x="110.00" y="335.05" width="6.40" height="4.55" fill="#161d20" />
<rect x="100.00" y="330.70" width="16.30" height="8.70" fill="#2d383f" rx="3" />
<rect x="110.00" y="379.60" width="6.40" height="6.30" fill="#161d20" />
<rect x="110.00" y="385.90" width="6.40" height="6.30" fill="#000" />
<rect x="100.00" y="379.80" width="16.30" height="12.20" fill="#2d383f" rx="3" />
<rect x="110.00" y="428.80" width="6.40" height="6.70" fill="#000" />
<rect x="110.00" y="435.50" width="6.40" height="6.70" fill="#000" />
<rect x="100.00" y="429.00" width="16.30" height="13.00" fill="#2d383f" rx="3" />
<rect x="110.00" y="478.60" width="6.40" height="8.30" fill="#000" />
<rect x="110.00" y="486.90" width="6.40" height="8.30" fill="#2d383f" />
<rect x="100.00" y="478.80" width="16.30" height="16.20" fill="#2d383f" rx="3" />
<path d="M122.00,318.3 L122.00,299.30 Q122.00,295.8 125.50,295.8 H186.90 Q190.40,295.8 191.25,299.20 L196.00,318.3 Z" fill="#2d383f" />
<path d="M200.20,318.3 L204.61,299.21 Q205.40,295.8 208.90,295.8 H263.40 Q266.90,295.8 267.70,299.21 L272.20,318.3 Z" fill="#3c474d" />
<path d="M276.00,318.3 L280.75,299.20 Q281.60,295.8 285.10,295.8 H338.50 Q342.00,295.8 342.90,299.18 L348.00,318.3 Z" fill="#2d383f" />
<path d="M351.60,318.3 L356.70,299.18 Q357.60,295.8 361.10,295.8 H414.50 Q418.00,295.8 418.87,299.19 L423.80,318.3 Z" fill="#2d383f" />
<path d="M272.2,318.3 L270.8,312.9 Q272.4,317.7 276.6,317.9 V318.3 Z" fill="#3c474d" />
<path d="M200.2,318.3 L201.6,312.9 Q200.2,317.7 196.6,317.9 V318.3 Z" fill="#3c474d" />
<text x="160.20" y="310.50" font-size="9.95" fill="#869095" text-anchor="middle" textLength="56.00" lengthAdjust="spacingAndGlyphs" stroke="#869095" stroke-width="0.22" >Periodic Jitter</text>
<text x="236.20" y="310.20" font-size="9.95" fill="#e9ebec" text-anchor="middle" textLength="56.60" lengthAdjust="spacingAndGlyphs" stroke="#e9ebec" stroke-width="0.22" >Random Jitter</text>
<text x="311.60" y="310.40" font-size="9.95" fill="#869095" text-anchor="middle" textLength="22.60" lengthAdjust="spacingAndGlyphs" stroke="#869095" stroke-width="0.22" >Noise</text>
<text x="387.60" y="310.40" font-size="9.95" fill="#869095" text-anchor="middle" textLength="17.40" lengthAdjust="spacingAndGlyphs" stroke="#869095" stroke-width="0.22" >SSC</text>
<text x="139.00" y="344.00" font-size="9.95" fill="#e9ebec" font-weight="bold" textLength="91.40" lengthAdjust="spacingAndGlyphs" >Random Jitter ON-OFF</text>
<path d="M271.3,329.3 H242.1 a3,3 0 0 0 -3,3 V348.8 a3,3 0 0 0 3,3 H271.3 Z" fill="#20c37d" />
<path d="M271.3,329.3 H300.2 a3,3 0 0 1 3,3 V348.8 a3,3 0 0 1 -3,3 H271.3 Z" fill="#9aa5a9" />
<text x="255.20" y="343.60" font-size="8.56" fill="#10251c" font-weight="bold" text-anchor="middle" textLength="14.60" lengthAdjust="spacingAndGlyphs" >OFF</text>
<text x="287.20" y="343.60" font-size="8.56" fill="#1b2428" font-weight="bold" text-anchor="middle" textLength="11.40" lengthAdjust="spacingAndGlyphs" >ON</text>
<text x="215.10" y="367.20" font-size="9.95" fill="#e9ebec" text-anchor="middle" textLength="48.60" lengthAdjust="spacingAndGlyphs" stroke="#e9ebec" stroke-width="0.22" >Crest Factor</text>
<text x="288.20" y="367.20" font-size="9.95" fill="#e9ebec" text-anchor="middle" textLength="43.00" lengthAdjust="spacingAndGlyphs" stroke="#e9ebec" stroke-width="0.22" >Magnitude</text>
<text x="361.20" y="367.20" font-size="9.95" fill="#e9ebec" text-anchor="middle" textLength="42.50" lengthAdjust="spacingAndGlyphs" stroke="#e9ebec" stroke-width="0.22" >Bandwidth</text>
<rect x="143.60" y="381.30" width="8.60" height="8.60" fill="none" rx="0.8" stroke="#6a757b" stroke-width="1.2" />
<text x="159.80" y="388.70" font-size="8.56" fill="#67737a" textLength="13.40" lengthAdjust="spacingAndGlyphs" stroke="#67737a" stroke-width="0.22" >RJ1</text>
<rect x="184.40" y="376.10" width="66.50" height="17.90" fill="#222526" rx="2.5" stroke="#525d63" stroke-width="1" />
<text x="217.65" y="388.50" font-size="9.95" fill="#90969a" text-anchor="middle" textLength="30.60" lengthAdjust="spacingAndGlyphs" stroke="#90969a" stroke-width="0.22" >6.00 dB</text>
<rect x="258.00" y="376.10" width="71.20" height="17.90" fill="#222526" rx="2.5" stroke="#525d63" stroke-width="1" />
<text x="293.60" y="388.50" font-size="9.95" fill="#90969a" text-anchor="middle" textLength="47.60" lengthAdjust="spacingAndGlyphs" stroke="#90969a" stroke-width="0.22" >0.100 UIrms</text>
<rect x="336.60" y="376.10" width="66.20" height="17.90" fill="#222526" rx="2.5" stroke="#525d63" stroke-width="1" />
<text x="369.70" y="388.50" font-size="9.95" fill="#90969a" text-anchor="middle" textLength="42.60" lengthAdjust="spacingAndGlyphs" stroke="#90969a" stroke-width="0.22" >50.00 MHz</text>
<rect x="143.60" y="405.05" width="8.60" height="8.60" fill="none" rx="0.8" stroke="#6a757b" stroke-width="1.2" />
<text x="159.80" y="412.45" font-size="8.56" fill="#67737a" textLength="13.40" lengthAdjust="spacingAndGlyphs" stroke="#67737a" stroke-width="0.22" >RJ2</text>
<rect x="184.40" y="399.85" width="66.50" height="17.90" fill="#222526" rx="2.5" stroke="#525d63" stroke-width="1" />
<text x="217.65" y="412.25" font-size="9.95" fill="#90969a" text-anchor="middle" textLength="30.60" lengthAdjust="spacingAndGlyphs" stroke="#90969a" stroke-width="0.22" >6.00 dB</text>
<rect x="258.00" y="399.85" width="71.20" height="17.90" fill="#222526" rx="2.5" stroke="#525d63" stroke-width="1" />
<text x="293.60" y="412.25" font-size="9.95" fill="#90969a" text-anchor="middle" textLength="47.60" lengthAdjust="spacingAndGlyphs" stroke="#90969a" stroke-width="0.22" >0.100 UIrms</text>
<rect x="336.60" y="399.85" width="66.20" height="17.90" fill="#222526" rx="2.5" stroke="#525d63" stroke-width="1" />
<text x="369.70" y="412.25" font-size="9.95" fill="#90969a" text-anchor="middle" textLength="42.60" lengthAdjust="spacingAndGlyphs" stroke="#90969a" stroke-width="0.22" >50.00 MHz</text>
<rect x="143.60" y="428.80" width="8.60" height="8.60" fill="none" rx="0.8" stroke="#6a757b" stroke-width="1.2" />
<text x="159.80" y="436.20" font-size="8.56" fill="#67737a" textLength="13.40" lengthAdjust="spacingAndGlyphs" stroke="#67737a" stroke-width="0.22" >RJ3</text>
<rect x="184.40" y="423.60" width="66.50" height="17.90" fill="#222526" rx="2.5" stroke="#525d63" stroke-width="1" />
<text x="217.65" y="436.00" font-size="9.95" fill="#90969a" text-anchor="middle" textLength="30.60" lengthAdjust="spacingAndGlyphs" stroke="#90969a" stroke-width="0.22" >6.00 dB</text>
<rect x="258.00" y="423.60" width="71.20" height="17.90" fill="#222526" rx="2.5" stroke="#525d63" stroke-width="1" />
<text x="293.60" y="436.00" font-size="9.95" fill="#90969a" text-anchor="middle" textLength="47.60" lengthAdjust="spacingAndGlyphs" stroke="#90969a" stroke-width="0.22" >0.100 UIrms</text>
<rect x="336.60" y="423.60" width="66.20" height="17.90" fill="#222526" rx="2.5" stroke="#525d63" stroke-width="1" />
<text x="369.70" y="436.00" font-size="9.95" fill="#90969a" text-anchor="middle" textLength="42.60" lengthAdjust="spacingAndGlyphs" stroke="#90969a" stroke-width="0.22" >50.00 MHz</text>
<rect x="752.80" y="290.00" width="308.40" height="202.00" fill="#000" />
<path d="M791.50,329.5 V483.7 M812.45,329.5 V483.7 M833.39,329.5 V483.7 M854.34,329.5 V483.7 M875.28,329.5 V483.7 M896.23,329.5 V483.7 M917.17,329.5 V483.7 M938.12,329.5 V483.7 M959.06,329.5 V483.7 M980.01,329.5 V483.7 M1000.95,329.5 V483.7 M1021.90,329.5 V483.7 M791.5,329.50 H1021.9 M791.5,346.63 H1021.9 M791.5,363.77 H1021.9 M791.5,380.90 H1021.9 M791.5,398.03 H1021.9 M791.5,415.17 H1021.9 M791.5,432.30 H1021.9 M791.5,449.43 H1021.9 M791.5,466.57 H1021.9 M791.5,483.70 H1021.9" fill="none" stroke="#4a4a4a" stroke-width="0.8" />
<path d="M791.5,329.5 H1021.9 M791.5,483.7 H1021.9" fill="none" stroke="#1a9465" stroke-width="1.1" />
<path d="M823.4,329.5 L884.9,483.7 M823.4,483.7 L884.9,329.5 M939.9,329.5 L1001.4,483.7 M939.9,483.7 L1001.4,329.5" fill="none" stroke="#20b87c" stroke-width="1.15" />
<text x="788.60" y="334.90" font-size="7.06" fill="#d8dadb" text-anchor="end" stroke="#d8dadb" stroke-width="0.22" >1</text>
<text x="788.60" y="486.20" font-size="7.06" fill="#d8dadb" text-anchor="end" stroke="#d8dadb" stroke-width="0.22" >-1</text>
<rect x="60.00" y="489.80" width="1001.20" height="46.70" fill="#000" rx="4" />
<rect x="60.00" y="489.80" width="1001.20" height="10.20" fill="#000" />
<text x="101.90" y="517.00" font-size="11.13" fill="#e9ebec" textLength="80.30" lengthAdjust="spacingAndGlyphs" stroke="#e9ebec" stroke-width="0.22" >Waveform Length</text>
<rect x="210.70" y="498.70" width="111.10" height="27.30" fill="#2d383f" rx="3" stroke="#4e5d66" stroke-width="1" />
<text x="215.60" y="516.40" font-size="9.95" fill="#77838a" textLength="61.60" lengthAdjust="spacingAndGlyphs" stroke="#77838a" stroke-width="0.22" >20480 Samples</text>
<text x="349.40" y="517.00" font-size="11.13" fill="#e9ebec" textLength="77.80" lengthAdjust="spacingAndGlyphs" stroke="#e9ebec" stroke-width="0.22" >Max.Wfm.Length</text>
<rect x="455.70" y="498.70" width="111.40" height="27.30" fill="#2d383f" rx="3" stroke="#4e5d66" stroke-width="1" />
<text x="461.20" y="516.40" font-size="9.95" fill="#e9ebec" textLength="88.20" lengthAdjust="spacingAndGlyphs" stroke="#e9ebec" stroke-width="0.22" >1000000000 Samples</text>
<text x="595.00" y="517.00" font-size="11.13" fill="#e9ebec" textLength="82.00" lengthAdjust="spacingAndGlyphs" stroke="#e9ebec" stroke-width="0.22" >Wfm.Sample.Rate</text>
<rect x="705.70" y="498.70" width="110.90" height="27.30" fill="#2d383f" rx="3" stroke="#4e5d66" stroke-width="1" />
<text x="710.80" y="516.40" font-size="9.95" fill="#5a666c" textLength="45.00" lengthAdjust="spacingAndGlyphs" stroke="#5a666c" stroke-width="0.22" >5.00 GSa/s</text>
<rect x="849.55" y="507.75" width="8.50" height="8.50" fill="#000" rx="0.4" stroke="#dfe2e3" stroke-width="1.3" />
<text x="873.50" y="516.30" font-size="10.49" fill="#e9ebec" textLength="37.90" lengthAdjust="spacingAndGlyphs" stroke="#e9ebec" stroke-width="0.22" >Keep SR</text>
<rect x="943.45" y="507.75" width="8.50" height="8.50" fill="#000" rx="0.4" stroke="#dfe2e3" stroke-width="1.3" />
<text x="968.00" y="516.30" font-size="10.49" fill="#e9ebec" textLength="65.00" lengthAdjust="spacingAndGlyphs" stroke="#e9ebec" stroke-width="0.22" >Set WL to Max</text>
<rect x="2.50" y="555.80" width="42.10" height="50.20" fill="#000" rx="3" />
<rect x="3.50" y="557.10" width="40.40" height="48.10" fill="url(#gHome)" rx="2.5" />
<rect x="12.30" y="568.70" width="10.40" height="10.60" fill="url(#gSq)" rx="2.2" stroke="#a9c2d4" stroke-width="0.8" />
<rect x="24.60" y="568.70" width="10.40" height="10.60" fill="url(#gSq)" rx="2.2" stroke="#a9c2d4" stroke-width="0.8" />
<rect x="12.30" y="582.30" width="10.40" height="10.60" fill="url(#gSq)" rx="2.2" stroke="#a9c2d4" stroke-width="0.8" />
<rect x="24.60" y="582.30" width="10.40" height="10.60" fill="url(#gSq)" rx="2.2" stroke="#a9c2d4" stroke-width="0.8" />
<rect x="46.30" y="555.90" width="360.20" height="50.10" fill="#000" rx="3" />
<rect x="408.40" y="556.00" width="376.60" height="50.00" fill="#000" rx="3" />
<rect x="788.00" y="556.50" width="197.60" height="49.50" fill="#000" rx="3" />
<rect x="989.70" y="556.80" width="88.30" height="49.20" fill="#000" rx="3" />
<path d="M48.9,601.1 V560.7 a3,3 0 0 1 3,-3 H86.69999999999999 a3,3 0 0 1 3,3 V562.9 H132.5 a3,3 0 0 1 3,3 V601.1 a3,3 0 0 1 -3,3 H51.9 a3,3 0 0 1 -3,-3 Z" fill="#f5f500" />
<path d="M50.199999999999996,569.2 H134.2 V601.1 a1.7,1.7 0 0 1 -1.7,1.7 H51.9 a1.7,1.7 0 0 1 -1.7,-1.7 Z" fill="#535d62" />
<path d="M89.69999999999999,564.1999999999999 H132.5 a1.7,1.7 0 0 1 1.7,1.7 V569.2 H89.69999999999999 Z" fill="#f5f500" />
<path d="M50.199999999999996,569.2 V560.7 a1.7,1.7 0 0 1 1.7,-1.7 H86.69999999999999 a1.7,1.7 0 0 1 1.7,1.7 V569.2 Z" fill="#000" />
<text x="69.10" y="567.80" font-size="9.95" fill="#e9ebec" text-anchor="middle" textLength="16.20" lengthAdjust="spacingAndGlyphs" stroke="#e9ebec" stroke-width="0.22" >CH1</text>
<text x="54.80" y="582.00" font-size="10.27" fill="#d6d9da" textLength="53.20" lengthAdjust="spacingAndGlyphs" stroke="#d6d9da" stroke-width="0.22" >100.00 mVpp</text>
<text x="54.80" y="597.00" font-size="10.27" fill="#d6d9da" textLength="24.60" lengthAdjust="spacingAndGlyphs" stroke="#d6d9da" stroke-width="0.22" >0.00 V</text>
<text x="129.70" y="596.10" font-size="8.13" fill="#d6d9da" text-anchor="end" textLength="28.10" lengthAdjust="spacingAndGlyphs" stroke="#d6d9da" stroke-width="0.22" >DC AMP</text>
<path d="M139.02,601.1 V560.7 a3,3 0 0 1 3,-3 H176.82 a3,3 0 0 1 3,3 V562.9 H222.62 a3,3 0 0 1 3,3 V601.1 a3,3 0 0 1 -3,3 H142.02 a3,3 0 0 1 -3,-3 Z" fill="#4b565c" />
<path d="M140.02,569.2 H224.62 V601.1 a2.0,2.0 0 0 1 -2.0,2.0 H142.02 a2.0,2.0 0 0 1 -2.0,-2.0 Z" fill="#2d383f" />
<path d="M179.82,563.9 H222.62 a2.0,2.0 0 0 1 2.0,2.0 V569.2 H179.82 Z" fill="#505b60" />
<path d="M140.02,569.2 V560.7 a2.0,2.0 0 0 1 2.0,-2.0 H176.82 a2.0,2.0 0 0 1 2.0,2.0 V569.2 Z" fill="#000" />
<text x="159.22" y="567.80" font-size="9.95" fill="#e9ebec" text-anchor="middle" textLength="16.20" lengthAdjust="spacingAndGlyphs" stroke="#e9ebec" stroke-width="0.22" >CH2</text>
<text x="144.92" y="582.00" font-size="10.27" fill="#d6d9da" textLength="35.20" lengthAdjust="spacingAndGlyphs" stroke="#d6d9da" stroke-width="0.22" >2.00 Vpp</text>
<text x="144.92" y="597.00" font-size="10.27" fill="#d6d9da" textLength="24.60" lengthAdjust="spacingAndGlyphs" stroke="#d6d9da" stroke-width="0.22" >0.00 V</text>
<text x="219.82" y="596.10" font-size="8.13" fill="#d6d9da" text-anchor="end" textLength="9.60" lengthAdjust="spacingAndGlyphs" stroke="#d6d9da" stroke-width="0.22" >AC</text>
<path d="M229.14000000000001,601.1 V560.7 a3,3 0 0 1 3,-3 H266.94 a3,3 0 0 1 3,3 V562.9 H312.74 a3,3 0 0 1 3,3 V601.1 a3,3 0 0 1 -3,3 H232.14000000000001 a3,3 0 0 1 -3,-3 Z" fill="#4b565c" />
<path d="M230.14000000000001,569.2 H314.74 V601.1 a2.0,2.0 0 0 1 -2.0,2.0 H232.14000000000001 a2.0,2.0 0 0 1 -2.0,-2.0 Z" fill="#2d383f" />
<path d="M269.94,563.9 H312.74 a2.0,2.0 0 0 1 2.0,2.0 V569.2 H269.94 Z" fill="#505b60" />
<path d="M230.14000000000001,569.2 V560.7 a2.0,2.0 0 0 1 2.0,-2.0 H266.94 a2.0,2.0 0 0 1 2.0,2.0 V569.2 Z" fill="#000" />
<text x="249.34" y="567.80" font-size="9.95" fill="#e9ebec" text-anchor="middle" textLength="16.20" lengthAdjust="spacingAndGlyphs" stroke="#e9ebec" stroke-width="0.22" >CH3</text>
<text x="235.04" y="582.00" font-size="10.27" fill="#d6d9da" textLength="53.20" lengthAdjust="spacingAndGlyphs" stroke="#d6d9da" stroke-width="0.22" >350.00 mVpp</text>
<text x="235.04" y="597.00" font-size="10.27" fill="#d6d9da" textLength="24.60" lengthAdjust="spacingAndGlyphs" stroke="#d6d9da" stroke-width="0.22" >0.00 V</text>
<text x="309.94" y="596.10" font-size="8.13" fill="#d6d9da" text-anchor="end" textLength="29.30" lengthAdjust="spacingAndGlyphs" stroke="#d6d9da" stroke-width="0.22" >DC HBW</text>
<path d="M319.26,601.1 V560.7 a3,3 0 0 1 3,-3 H357.06 a3,3 0 0 1 3,3 V562.9 H402.86 a3,3 0 0 1 3,3 V601.1 a3,3 0 0 1 -3,3 H322.26 a3,3 0 0 1 -3,-3 Z" fill="#4b565c" />
<path d="M320.26,569.2 H404.86 V601.1 a2.0,2.0 0 0 1 -2.0,2.0 H322.26 a2.0,2.0 0 0 1 -2.0,-2.0 Z" fill="#2d383f" />
<path d="M360.06,563.9 H402.86 a2.0,2.0 0 0 1 2.0,2.0 V569.2 H360.06 Z" fill="#505b60" />
<path d="M320.26,569.2 V560.7 a2.0,2.0 0 0 1 2.0,-2.0 H357.06 a2.0,2.0 0 0 1 2.0,2.0 V569.2 Z" fill="#000" />
<text x="339.46" y="567.80" font-size="9.95" fill="#e9ebec" text-anchor="middle" textLength="16.20" lengthAdjust="spacingAndGlyphs" stroke="#e9ebec" stroke-width="0.22" >CH4</text>
<text x="325.16" y="582.00" font-size="10.27" fill="#d6d9da" textLength="53.20" lengthAdjust="spacingAndGlyphs" stroke="#d6d9da" stroke-width="0.22" >350.00 mVpp</text>
<text x="325.16" y="597.00" font-size="10.27" fill="#d6d9da" textLength="24.60" lengthAdjust="spacingAndGlyphs" stroke="#d6d9da" stroke-width="0.22" >0.00 V</text>
<text x="400.06" y="596.10" font-size="8.13" fill="#d6d9da" text-anchor="end" textLength="29.30" lengthAdjust="spacingAndGlyphs" stroke="#d6d9da" stroke-width="0.22" >DC HBW</text>
<path d="M410.9,600.9 V565.9 a3,3 0 0 1 3,-3 H441.5 V560.2 a3,3 0 0 1 3,-3 H479.4 a3,3 0 0 1 3,3 V600.9 a3,3 0 0 1 -3,3 H413.9 a3,3 0 0 1 -3,-3 Z" fill="#4b565c" />
<path d="M411.9,568.9 H481.4 V600.9 a2.0,2.0 0 0 1 -2.0,2.0 H413.9 a2.0,2.0 0 0 1 -2.0,-2.0 Z" fill="#2d383f" />
<path d="M441.5,563.9 H413.9 a2.0,2.0 0 0 0 -2.0,2.0 V568.9 H441.5 Z" fill="#505b60" />
<path d="M442.5,568.9 V560.2 a2.0,2.0 0 0 1 2.0,-2.0 H479.4 a2.0,2.0 0 0 1 2.0,2.0 V568.9 Z" fill="#000" />
<text x="461.05" y="567.30" font-size="9.95" fill="#4c8fd8" text-anchor="middle" textLength="21.60" lengthAdjust="spacingAndGlyphs" stroke="#4c8fd8" stroke-width="0.22" >Clock</text>
<path d="M485.6,600.9 V565.9 a3,3 0 0 1 3,-3 H516.7 V560.2 a3,3 0 0 1 3,-3 H553.9 a3,3 0 0 1 3,3 V600.9 a3,3 0 0 1 -3,3 H488.6 a3,3 0 0 1 -3,-3 Z" fill="#4b565c" />
<path d="M486.6,568.9 H555.9 V600.9 a2.0,2.0 0 0 1 -2.0,2.0 H488.6 a2.0,2.0 0 0 1 -2.0,-2.0 Z" fill="#2d383f" />
<path d="M516.7,563.9 H488.6 a2.0,2.0 0 0 0 -2.0,2.0 V568.9 H516.7 Z" fill="#505b60" />
<path d="M517.7,568.9 V560.2 a2.0,2.0 0 0 1 2.0,-2.0 H553.9 a2.0,2.0 0 0 1 2.0,2.0 V568.9 Z" fill="#000" />
<text x="535.90" y="567.30" font-size="9.95" fill="#62d67c" text-anchor="middle" textLength="30.40" lengthAdjust="spacingAndGlyphs" stroke="#62d67c" stroke-width="0.22" >Sample</text>
<path d="M560.2,600.9 V565.9 a3,3 0 0 1 3,-3 H591.3 V560.2 a3,3 0 0 1 3,-3 H628.5 a3,3 0 0 1 3,3 V600.9 a3,3 0 0 1 -3,3 H563.2 a3,3 0 0 1 -3,-3 Z" fill="#4b565c" />
<path d="M561.2,568.9 H630.5 V600.9 a2.0,2.0 0 0 1 -2.0,2.0 H563.2 a2.0,2.0 0 0 1 -2.0,-2.0 Z" fill="#2d383f" />
<path d="M591.3,563.9 H563.2 a2.0,2.0 0 0 0 -2.0,2.0 V568.9 H591.3 Z" fill="#505b60" />
<path d="M592.3,568.9 V560.2 a2.0,2.0 0 0 1 2.0,-2.0 H628.5 a2.0,2.0 0 0 1 2.0,2.0 V568.9 Z" fill="#000" />
<text x="610.50" y="567.30" font-size="9.95" fill="#e2705f" text-anchor="middle" textLength="28.60" lengthAdjust="spacingAndGlyphs" stroke="#e2705f" stroke-width="0.22" >Trigger</text>
<text x="446.90" y="579.10" font-size="7.92" fill="#e9ebec" text-anchor="middle" textLength="63.60" lengthAdjust="spacingAndGlyphs" stroke="#e9ebec" stroke-width="0.22" >Internal Reference</text>
<text x="446.90" y="588.00" font-size="7.92" fill="#e9ebec" text-anchor="middle" textLength="19.40" lengthAdjust="spacingAndGlyphs" stroke="#e9ebec" stroke-width="0.22" >Clock</text>
<text x="446.90" y="600.80" font-size="8.35" fill="#e9ebec" text-anchor="middle" textLength="37.60" lengthAdjust="spacingAndGlyphs" stroke="#e9ebec" stroke-width="0.22" >10.00 MHz</text>
<text x="521.60" y="589.80" font-size="8.35" fill="#e9ebec" text-anchor="middle" textLength="61.60" lengthAdjust="spacingAndGlyphs" stroke="#e9ebec" stroke-width="0.22" >5.0000000 GSa/s</text>
<text x="596.60" y="589.80" font-size="8.35" fill="#e9ebec" text-anchor="middle" textLength="17.20" lengthAdjust="spacingAndGlyphs" stroke="#e9ebec" stroke-width="0.22" >10us</text>
<path d="M790.8,576 V601.4 a2.5,2.5 0 0 0 2.5,2.5 H832.6999999999999 a2.5,2.5 0 0 0 2.5,-2.5 V571.6 a3,3 0 0 0 -3,-3 H817.0999999999999 V569.2 a2.5,2.5 0 0 0 -2.5,-2.5 H793.3 a2.5,2.5 0 0 0 -2.5,2.5 Z" fill="#080505" stroke="#2b343a" stroke-width="1" />
<path d="M817.5999999999999,569.1 H832.3 a2.6,2.6 0 0 1 2.6,2.6 V573.5 H817.5999999999999 Z" fill="#46535b" />
<text x="793.60" y="575.40" font-size="9.2" fill="#e9ebec" textLength="19.80" lengthAdjust="spacingAndGlyphs" stroke="#e9ebec" stroke-width="0.22" >Sync</text>
<text x="812.70" y="595.60" font-size="10.38" fill="#e9ebec" text-anchor="middle" textLength="18.00" lengthAdjust="spacingAndGlyphs" stroke="#e9ebec" stroke-width="0.22" >CH1</text>
<path d="M839.1999999999999,576 V601.4 a2.5,2.5 0 0 0 2.5,2.5 H881.0999999999999 a2.5,2.5 0 0 0 2.5,-2.5 V571.6 a3,3 0 0 0 -3,-3 H865.4999999999999 V569.2 a2.5,2.5 0 0 0 -2.5,-2.5 H841.6999999999999 a2.5,2.5 0 0 0 -2.5,2.5 Z" fill="#080505" stroke="#2b343a" stroke-width="1" />
<path d="M865.9999999999999,569.1 H880.6999999999999 a2.6,2.6 0 0 1 2.6,2.6 V573.5 H865.9999999999999 Z" fill="#46535b" />
<text x="842.00" y="575.40" font-size="9.2" fill="#e9ebec" textLength="19.80" lengthAdjust="spacingAndGlyphs" stroke="#e9ebec" stroke-width="0.22" >Sync</text>
<text x="861.10" y="595.60" font-size="10.38" fill="#e9ebec" text-anchor="middle" textLength="18.00" lengthAdjust="spacingAndGlyphs" stroke="#e9ebec" stroke-width="0.22" >CH2</text>
<path d="M887.5999999999999,576 V601.4 a2.5,2.5 0 0 0 2.5,2.5 H929.4999999999999 a2.5,2.5 0 0 0 2.5,-2.5 V571.6 a3,3 0 0 0 -3,-3 H913.8999999999999 V569.2 a2.5,2.5 0 0 0 -2.5,-2.5 H890.0999999999999 a2.5,2.5 0 0 0 -2.5,2.5 Z" fill="#080505" stroke="#2b343a" stroke-width="1" />
<path d="M914.3999999999999,569.1 H929.0999999999999 a2.6,2.6 0 0 1 2.6,2.6 V573.5 H914.3999999999999 Z" fill="#46535b" />
<text x="890.40" y="575.40" font-size="9.2" fill="#e9ebec" textLength="19.80" lengthAdjust="spacingAndGlyphs" stroke="#e9ebec" stroke-width="0.22" >Sync</text>
<text x="909.50" y="595.60" font-size="10.38" fill="#e9ebec" text-anchor="middle" textLength="18.00" lengthAdjust="spacingAndGlyphs" stroke="#e9ebec" stroke-width="0.22" >CH3</text>
<path d="M936.0,576 V601.4 a2.5,2.5 0 0 0 2.5,2.5 H977.9 a2.5,2.5 0 0 0 2.5,-2.5 V571.6 a3,3 0 0 0 -3,-3 H962.3 V569.2 a2.5,2.5 0 0 0 -2.5,-2.5 H938.5 a2.5,2.5 0 0 0 -2.5,2.5 Z" fill="#080505" stroke="#2b343a" stroke-width="1" />
<path d="M962.8,569.1 H977.5 a2.6,2.6 0 0 1 2.6,2.6 V573.5 H962.8 Z" fill="#46535b" />
<text x="938.80" y="575.40" font-size="9.2" fill="#e9ebec" textLength="19.80" lengthAdjust="spacingAndGlyphs" stroke="#e9ebec" stroke-width="0.22" >Sync</text>
<text x="957.90" y="595.60" font-size="10.38" fill="#e9ebec" text-anchor="middle" textLength="18.00" lengthAdjust="spacingAndGlyphs" stroke="#e9ebec" stroke-width="0.22" >CH4</text>
<text x="1033.90" y="586.80" font-size="9.63" fill="#e9ebec" text-anchor="middle" textLength="34.20" lengthAdjust="spacingAndGlyphs" stroke="#e9ebec" stroke-width="0.22" >16:09:35</text>
<text x="1033.50" y="599.10" font-size="9.63" fill="#e9ebec" text-anchor="middle" textLength="47.20" lengthAdjust="spacingAndGlyphs" stroke="#e9ebec" stroke-width="0.22" >2026/03/11</text>
<g fill="none" stroke="#cfd3d5" stroke-width="0.8" stroke-linecap="round" stroke-linejoin="round"><path d="M1021.2,562.4 V571.6 M1019.7,564 L1021.2,562.2 L1022.7,564 M1021.2,569.6 L1019.2,567.8 V566.2 M1021.2,568.6 L1023.2,567 V565.6 M1020.4,571.4 H1022"/><path d="M1042.4,565.6 H1044.2 L1047.4,562.8 V571.4 L1044.2,568.6 H1042.4 Z M1048.8,565.8 L1051,568.4 M1051,565.8 L1048.8,568.4" stroke="#b9bec1"/></g>
<text x="1033.60" y="570.40" font-size="8.13" fill="#eceeef" font-weight="bold" text-anchor="middle" textLength="10.40" lengthAdjust="spacingAndGlyphs" font-style="italic">LXI</text>
</svg>
</body></html>
